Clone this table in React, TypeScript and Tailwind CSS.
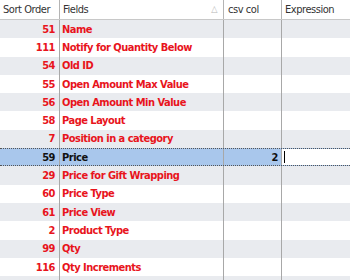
import React from "react";

const rows: [number, string][] = [
  [51, "Name"],
  [111, "Notify for Quantity Below"],
  [54, "Old ID"],
  [55, "Open Amount Max Value"],
  [56, "Open Amount Min Value"],
  [58, "Page Layout"],
  [7, "Position in a category"],
  [59, "Price"],
  [29, "Price for Gift Wrapping"],
  [60, "Price Type"],
  [61, "Price View"],
  [2, "Product Type"],
  [99, "Qty"],
  [116, "Qty Increments"],
  [0, ""],
];

const SELECTED = 7;

export default function App() {
  return (
    <div
      className="w-[350px] h-[280px] overflow-hidden bg-white text-[11px] leading-none whitespace-nowrap"
      style={{ fontFamily: "'DejaVu Sans Condensed', 'DejaVu Sans', sans-serif" }}
    >
      {/* Header */}
      <div className="grid grid-cols-[60px_164px_58px_1fr] h-[20px] border-b border-[#c8c8c8] text-[#333] bg-white tracking-[-0.45px]">
        <div className="flex items-center pl-[3px] border-r border-[#b4b4b4]">Sort Order</div>
        <div className="flex items-center pl-[3px] pr-[6px] justify-between border-r border-[#b4b4b4]">
          <span>Fields</span>
          <span className="text-[9px] text-[#b8b8b8]">△</span>
        </div>
        <div className="flex items-center pl-[4px] border-r border-[#b4b4b4]">csv col</div>
        <div className="flex items-center pl-[3px]">Expression</div>
      </div>

      {/* Rows */}
      {rows.map(([order, name], i) => {
        const sel = i === SELECTED;
        const bg = sel ? "bg-[#a9c7ec]" : i % 2 === 0 ? "bg-[#e9ebef]" : "bg-white";
        return (
          <div
            key={i}
            className={`grid grid-cols-[60px_164px_58px_1fr] h-[18.3px] font-bold tracking-[-0.5px] ${bg} ${
              sel ? "text-[#111] border-y border-dotted border-[#555]" : "text-[#e8141c]"
            }`}
          >
            <div className="flex items-center justify-end pr-[4px] border-r border-[#a8a8a8]">
              {name ? order : ""}
            </div>
            <div className="flex items-center pl-[2px] border-r border-[#a8a8a8]">{name}</div>
            <div className="flex items-center justify-end pr-[3px] border-r border-[#a8a8a8]">{sel ? "2" : ""}</div>
            <div className={`flex items-center pl-[2px] ${sel ? "bg-white" : ""}`}>
              {sel && <span className="w-px h-[12px] bg-black" />}
            </div>
          </div>
        );
      })}
    </div>
  );
}
